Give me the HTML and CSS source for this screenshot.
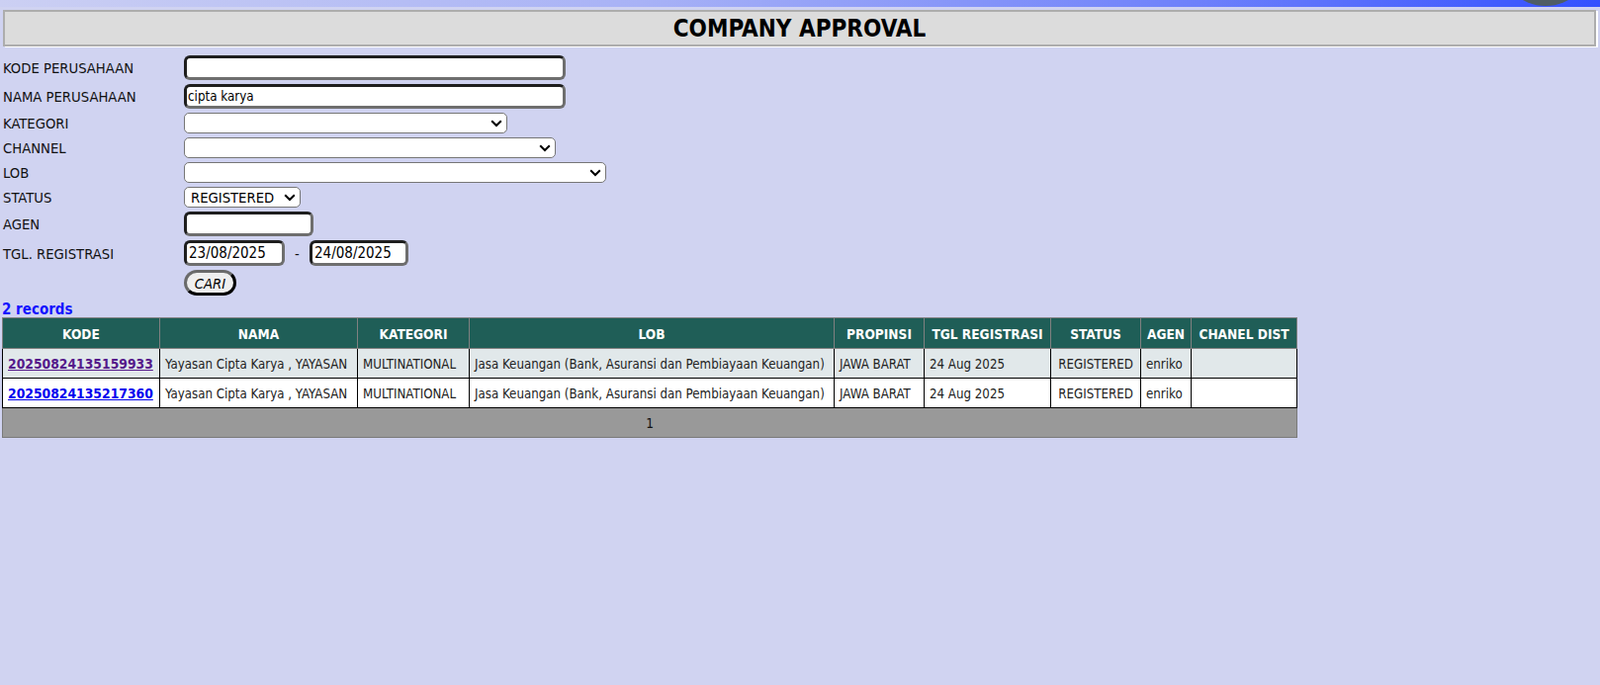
FILE: index.html
```html
<!DOCTYPE html>
<html lang="id">
<head>
<meta charset="utf-8">
<title>Company Approval</title>
<link rel="stylesheet" href="styles.css">
</head>
<body>
<div class="topbar"><span class="avatar"></span></div>
<div class="titlebox"><h1 class="title">COMPANY APPROVAL</h1></div>

<table class="form">
  <tr><td class="lbl">KODE PERUSAHAAN</td><td><input class="txt w-kode" type="text" value=""></td></tr>
  <tr><td class="lbl">NAMA PERUSAHAAN</td><td><input class="txt w-kode" type="text" value="cipta karya"></td></tr>
  <tr><td class="lbl">KATEGORI</td><td><span class="selwrap w-kat"><select class="sel"><option></option></select><svg class="chev" viewBox="0 0 12 8" width="12" height="8"><path d="M1.2 1.2 L6 6 L10.8 1.2" fill="none" stroke="#000" stroke-width="2"/></svg></span></td></tr>
  <tr><td class="lbl">CHANNEL</td><td><span class="selwrap w-chan"><select class="sel"><option></option></select><svg class="chev" viewBox="0 0 12 8" width="12" height="8"><path d="M1.2 1.2 L6 6 L10.8 1.2" fill="none" stroke="#000" stroke-width="2"/></svg></span></td></tr>
  <tr><td class="lbl">LOB</td><td><span class="selwrap w-lob"><select class="sel"><option></option></select><svg class="chev" viewBox="0 0 12 8" width="12" height="8"><path d="M1.2 1.2 L6 6 L10.8 1.2" fill="none" stroke="#000" stroke-width="2"/></svg></span></td></tr>
  <tr><td class="lbl">STATUS</td><td><span class="selwrap w-status"><select class="sel"><option>REGISTERED</option></select><svg class="chev" viewBox="0 0 12 8" width="12" height="8"><path d="M1.2 1.2 L6 6 L10.8 1.2" fill="none" stroke="#000" stroke-width="2"/></svg></span></td></tr>
  <tr><td class="lbl">AGEN</td><td><input class="txt w-agen" type="text" value=""></td></tr>
  <tr><td class="lbl">TGL. REGISTRASI</td><td><div class="daterow"><input class="txt date w-d1" type="text" value="23/08/2025"><span class="dash">-</span><input class="txt date w-d2" type="text" value="24/08/2025"></div></td></tr>
  <tr><td class="lbl"></td><td><button class="btn" type="button">CARI</button></td></tr>
</table>

<div class="records">2 records</div>

<table class="grid">
  <colgroup>
    <col class="c-kode"><col class="c-nama"><col class="c-kat"><col class="c-lob"><col class="c-prop"><col class="c-tgl"><col class="c-status"><col class="c-agen"><col class="c-chan">
  </colgroup>
  <thead>
    <tr><th>KODE</th><th>NAMA</th><th>KATEGORI</th><th>LOB</th><th>PROPINSI</th><th>TGL REGISTRASI</th><th>STATUS</th><th>AGEN</th><th>CHANEL DIST</th></tr>
  </thead>
  <tbody>
    <tr class="odd">
      <td><a class="kode visited" href="#">20250824135159933</a></td>
      <td>Yayasan Cipta Karya , YAYASAN</td>
      <td>MULTINATIONAL</td>
      <td>Jasa Keuangan (Bank, Asuransi dan Pembiayaan Keuangan)</td>
      <td>JAWA BARAT</td>
      <td>24 Aug 2025</td>
      <td class="center">REGISTERED</td>
      <td>enriko</td>
      <td></td>
    </tr>
    <tr class="even">
      <td><a class="kode" href="#">20250824135217360</a></td>
      <td>Yayasan Cipta Karya , YAYASAN</td>
      <td>MULTINATIONAL</td>
      <td>Jasa Keuangan (Bank, Asuransi dan Pembiayaan Keuangan)</td>
      <td>JAWA BARAT</td>
      <td>24 Aug 2025</td>
      <td class="center">REGISTERED</td>
      <td>enriko</td>
      <td></td>
    </tr>
    <tr class="pager"><td colspan="9">1</td></tr>
  </tbody>
</table>
</body>
</html>
```

FILE: styles.css
```css
html, body {
  margin: 0;
  padding: 0;
}
body {
  background: #d0d3f1;
  font-family: "DejaVu Sans Condensed", "DejaVu Sans", sans-serif;
  font-stretch: condensed;
  font-size: 14.7px;
  color: #111;
  position: relative;
  overflow: hidden;
  height: 693px;
}
.topbar {
  height: 7px;
  background: linear-gradient(to right, #ccd0f3 0%, #a8b2f6 40%, #6d80fb 75%, #3350ff 100%);
  position: relative;
  overflow: hidden;
}
.avatar {
  position: absolute;
  left: 1516px;
  top: -88px;
  width: 94px;
  height: 94px;
  border-radius: 50%;
  background: #4f5d64;
}
.titlebox {
  margin: 3px 4px 0 3px;
  height: 33px;
  border: 2px solid #adadad;
  background: #dcdcdc;
  box-shadow: 2px 1px 0 #ffffff;
  display: flex;
  align-items: center;
  justify-content: center;
}
.title {
  margin: 0;
  font-size: 24px;
  font-weight: bold;
  color: #000;
  line-height: 1;
}
.form {
  border-spacing: 2px;
  margin-top: 6px;
}
.form td {
  padding: 1px;
  vertical-align: middle;
}
.form td.lbl {
  width: 179px;
  white-space: nowrap;
}
.txt {
  box-sizing: border-box;
  height: 25px;
  border-style: solid;
  border-width: 3px;
  border-color: #1e1e1e #6e6e6e #6e6e6e #1e1e1e;
  border-radius: 6px;
  background: #fff;
  font-family: inherit;
  font-stretch: condensed;
  font-size: 13.3px;
  padding: 0 1px;
  color: #000;
  display: block;
  margin: 0;
}
.txt.date {
  height: 26px;
  font-size: 15px;
  padding: 0 2px;
}
.w-kode { width: 386px; }
.w-agen { width: 131px; }
.w-d1 { width: 102px; }
.w-d2 { width: 100px; }
.daterow {
  display: flex;
  align-items: center;
}
.dash {
  width: 25px;
  text-align: center;
}
.selwrap {
  position: relative;
  display: block;
  height: 21px;
}
.sel {
  -webkit-appearance: none;
  appearance: none;
  box-sizing: border-box;
  width: 100%;
  height: 21px;
  font-family: inherit;
  font-stretch: condensed;
  font-size: 14.7px;
  color: #000;
  background: #fff;
  border: 1px solid #767676;
  border-radius: 5px;
  margin: 0;
  display: block;
  padding: 0 20px 0 6px;
}
.chev {
  position: absolute;
  right: 5px;
  top: 7px;
  pointer-events: none;
}
.w-kat { width: 327px; }
.w-chan { width: 376px; }
.w-lob { width: 427px; }
.w-status { width: 118px; }
.btn {
  box-sizing: border-box;
  width: 53px;
  height: 26px;
  border-style: solid;
  border-width: 3px;
  border-color: #6a6a6a #000 #000 #6a6a6a;
  border-radius: 13px;
  background: #efefef;
  font-family: inherit;
  font-stretch: condensed;
  font-size: 14.7px;
  font-style: italic;
  color: #000;
  padding: 0;
  display: block;
}
.records {
  color: #1414ff;
  font-weight: bold;
  font-size: 15px;
  margin: 3px 0 0 2px;
  line-height: 16px;
}
.grid {
  border-collapse: collapse;
  table-layout: fixed;
  width: 1309px;
  margin-left: 2px;
  font-size: 13.2px;
}
.c-kode { width: 159px; }
.c-nama { width: 200px; }
.c-kat { width: 113px; }
.c-lob { width: 369px; }
.c-prop { width: 91px; }
.c-tgl { width: 128px; }
.c-status { width: 91px; }
.c-agen { width: 51px; }
.c-chan { width: 107px; }
.grid th {
  background: #1f5e57;
  color: #fff;
  font-weight: bold;
  font-size: 13.6px;
  border: 1px solid #808080;
  height: 29px;
  padding: 1px 4px 0;
  white-space: nowrap;
  overflow: hidden;
}
.grid td {
  border: 1px solid #000;
  height: 28px;
  padding: 1px 5px 0;
  color: #222;
  white-space: nowrap;
  overflow: hidden;
}
.grid td.center {
  text-align: center;
}
.grid tr.odd td {
  background: #e1e8ea;
}
.grid tr.even td {
  background: #ffffff;
}
.kode {
  font-weight: bold;
  color: #0000ee;
  text-decoration: underline;
  font-size: 13.8px;
}
.kode.visited {
  color: #551a8b;
}
.grid tr.pager td {
  background: #999999;
  border: 1px solid #7a7a7a;
  text-align: center;
  font-size: 13.5px;
  color: #111;
}
```
